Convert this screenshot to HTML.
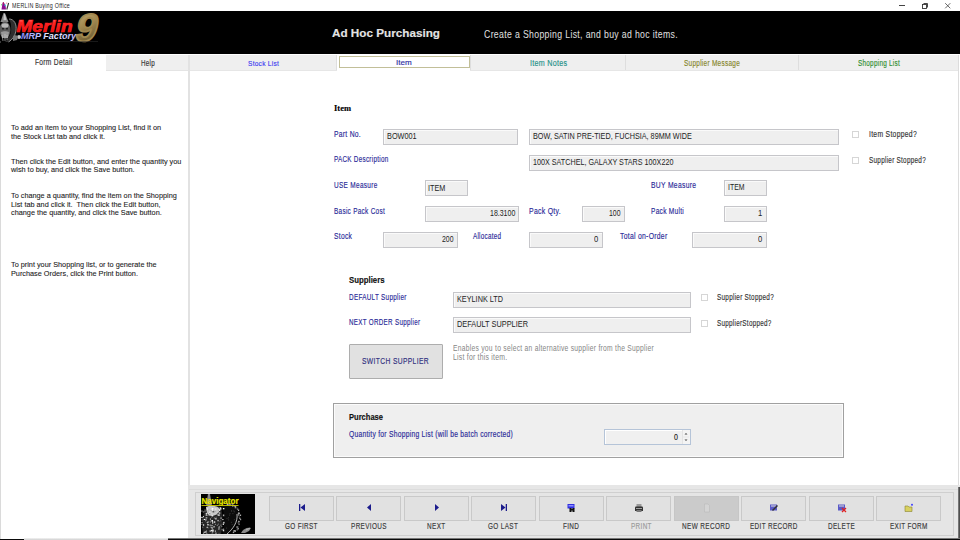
<!DOCTYPE html>
<html><head><meta charset="utf-8"><title>MERLIN Buying Office</title>
<style>
html,body{margin:0;padding:0;width:960px;height:540px;overflow:hidden;background:#fff;position:relative;font-family:"Liberation Sans",sans-serif}
.t{position:absolute;white-space:nowrap;transform-origin:0 0;-webkit-text-stroke:0.15px currentColor}
.b{position:absolute;box-sizing:border-box}
.fld{position:absolute;box-sizing:border-box;background:#efefef;border:1px solid #c6c6ca;box-shadow:inset 1px 1px 0 #fafafa}
.cb{position:absolute;box-sizing:border-box;width:7px;height:7px;border:1px solid #d6d6d6;background:#fff}
.nb{position:absolute;box-sizing:border-box;top:496px;width:65px;height:25px;background:#e1e1e1;border:1px solid #c9c9c9}
</style></head><body>
<!-- title bar -->
<svg class="b" style="left:0;top:0" width="11" height="11" viewBox="0 0 11 11"><path d="M1.5 9.5 L2.5 3 L3.5 2 L5.5 5.5 L6 9.5Z" fill="#8a1090"/><path d="M2.8 2.2 L3.6 2 L4.3 4 L3 4.5Z" fill="#b02060"/><rect x="4.6" y="4.5" width="1.3" height="1.5" fill="#30d0e0"/><path d="M5.5 4 L6.5 2.5 L7.5 3Z" fill="#e06080"/><path d="M8.6 3 L6.8 9.5" stroke="#333" stroke-width="1.1"/><rect x="1" y="4" width="1" height="1.5" fill="#60e060" opacity="0.7"/></svg>
<div class="b" style="left:899px;top:5px;width:6px;height:1px;background:#444"></div>
<svg class="b" style="left:921px;top:2px" width="8" height="8" viewBox="0 0 8 8"><rect x="1.5" y="2.5" width="4" height="4" fill="none" stroke="#333" stroke-width="0.9"/><path d="M2.5 1.5 H6.5 V5.5" fill="none" stroke="#333" stroke-width="0.9"/></svg>
<svg class="b" style="left:944px;top:2px" width="8" height="8" viewBox="0 0 8 8"><path d="M1.2 1.2 L6.3 6.3 M6.3 1.2 L1.2 6.3" stroke="#444" stroke-width="0.8"/></svg>
<!-- banner -->
<div class="b" style="left:0;top:11px;width:960px;height:43px;background:#000"></div>
<!-- tab area -->
<div class="b" style="left:0;top:54px;width:1px;height:486px;background:#dadada"></div>
<div class="b" style="left:106px;top:55px;width:83px;height:16px;background:#efefef;border-bottom:1px solid #e4e4e4"></div>
<div class="b" style="left:188px;top:55px;width:2px;height:430px;background:#e2e2e2"></div>
<div class="b" style="left:190px;top:55px;width:768px;height:16px;background:#efefef;border-bottom:1px solid #e6e6e6"></div>
<div class="b" style="left:336px;top:55px;width:1px;height:15px;background:#dedede"></div>
<div class="b" style="left:470px;top:55px;width:1px;height:15px;background:#dedede"></div>
<div class="b" style="left:625px;top:55px;width:1px;height:15px;background:#dedede"></div>
<div class="b" style="left:798px;top:55px;width:1px;height:15px;background:#dedede"></div>
<div class="b" style="left:337px;top:55px;width:133px;height:16px;background:#fff"></div>
<div class="b" style="left:339px;top:56px;width:131px;height:12px;background:#fff;border:1px solid #c2bf98"></div>
<div class="b" style="left:958px;top:55px;width:1px;height:430px;background:#dcdcdc"></div>
<!-- form fields -->
<div class="fld" style="left:383px;top:129px;width:135px;height:16px"></div>
<div class="fld" style="left:529px;top:129px;width:310px;height:16px"></div>
<div class="fld" style="left:529px;top:155px;width:310px;height:16px"></div>
<div class="cb" style="left:852px;top:131px"></div>
<div class="cb" style="left:852px;top:157px"></div>
<div class="fld" style="left:425px;top:180px;width:43px;height:16px"></div>
<div class="fld" style="left:724px;top:180px;width:43px;height:16px"></div>
<div class="fld" style="left:425px;top:206px;width:94px;height:16px"></div>
<div class="fld" style="left:582px;top:206px;width:43px;height:16px"></div>
<div class="fld" style="left:724px;top:206px;width:43px;height:16px"></div>
<div class="fld" style="left:383px;top:232px;width:75px;height:16px"></div>
<div class="fld" style="left:529px;top:232px;width:74px;height:16px"></div>
<div class="fld" style="left:692px;top:232px;width:75px;height:16px"></div>
<!-- suppliers -->
<div class="fld" style="left:453px;top:292px;width:238px;height:16px"></div>
<div class="fld" style="left:453px;top:317px;width:238px;height:16px"></div>
<div class="cb" style="left:701px;top:294px"></div>
<div class="cb" style="left:701px;top:320px"></div>
<div class="b" style="left:349px;top:344px;width:94px;height:35px;background:#e1e1e1;border:1px solid #adadad;border-radius:1px"></div>
<!-- purchase -->
<div class="b" style="left:333px;top:403px;width:511px;height:55px;background:#efefef;border:1px solid #a0a0a0;box-shadow:inset 1px 1px 0 #fbfbfb,inset -1px -1px 0 #fbfbfb"></div>
<div class="b" style="left:604px;top:429px;width:87px;height:16px;background:#f0f0f0;border:1px solid #b5c4d8;box-shadow:inset 1px 1px 0 #fff"></div>
<div class="b" style="left:682px;top:430px;width:8px;height:14px;background:#f4f4f4;border-left:1px solid #e4e4e4"></div>
<svg class="b" style="left:683px;top:431px" width="6" height="12" viewBox="0 0 6 12"><path d="M1.5 3.5 L3 2 L4.5 3.5Z" fill="#444"/><path d="M1.5 8.5 L3 10 L4.5 8.5Z" fill="#444"/><path d="M0 6 H6" stroke="#ddd" stroke-width="0.6"/></svg>
<!-- nav bar -->
<div class="b" style="left:188px;top:485px;width:772px;height:55px;background:#e6e6e6"></div>
<div class="b" style="left:189px;top:489px;width:770px;height:1px;background:#dcdcdc"></div>
<div class="b" style="left:195px;top:492px;width:759px;height:44px;border:1px solid #cfcfcf;background:#e5e5e5"></div>
<div class="b" style="left:958px;top:487px;width:2px;height:53px;background:linear-gradient(90deg,#8a8a8a,#3a3a3a)"></div>

<div class="b" style="left:0;top:539px;width:960px;height:1px;background:#0a0a0a"></div>
<div class="b" style="left:24px;top:538px;width:144px;height:2px;background:linear-gradient(#f4f4f4,#cfcfcf)"></div>
<div class="b" style="left:168px;top:538px;width:792px;height:1px;background:#777"></div>
<!-- nav buttons -->
<div class="nb" style="left:269px"></div>
<div class="nb" style="left:336px"></div>
<div class="nb" style="left:404px"></div>
<div class="nb" style="left:471px"></div>
<div class="nb" style="left:539px"></div>
<div class="nb" style="left:606px"></div>
<div class="nb" style="left:674px;background:#cbcbcb;border-color:#c6c6c6"></div>
<div class="nb" style="left:741px"></div>
<div class="nb" style="left:809px"></div>
<div class="nb" style="left:876px"></div>
<!-- nav icons -->
<svg class="b" style="left:297.5px;top:503.3px" width="8" height="9" viewBox="0 0 8 9"><rect x="1" y="1" width="1.3" height="7" fill="#1c1c8c"/><path d="M7 1 L2.5 4.5 L7 8Z" fill="#1c1c8c"/></svg>
<svg class="b" style="left:364.5px;top:503.3px" width="8" height="9" viewBox="0 0 8 9"><path d="M6 1 L2 4.5 L6 8Z" fill="#1c1c8c"/></svg>
<svg class="b" style="left:432.5px;top:503.3px" width="8" height="9" viewBox="0 0 8 9"><path d="M2 1 L6 4.5 L2 8Z" fill="#1c1c8c"/></svg>
<svg class="b" style="left:499.5px;top:503.3px" width="8" height="9" viewBox="0 0 8 9"><path d="M1 1 L5.5 4.5 L1 8Z" fill="#1c1c8c"/><rect x="5.7" y="1" width="1.3" height="7" fill="#1c1c8c"/></svg>
<svg class="b" style="left:566.5px;top:502.8px" width="10" height="10" viewBox="0 0 10 10"><rect x="0.5" y="1" width="7" height="4.5" fill="#3030e0"/><rect x="1.5" y="2" width="5" height="1.5" fill="#8a8aff"/><path d="M2.5 5 h2 v1 h1 v-1 h2 v4 h-2 v-1.5 h-1 v1.5 h-2z" fill="#111"/></svg>
<svg class="b" style="left:633.5px;top:502.8px" width="10" height="10" viewBox="0 0 10 10"><rect x="2.5" y="1" width="5" height="3" fill="#999"/><path d="M1 4.5 Q1 3.5 2 3.5 H8 Q9 3.5 9 4.5 V8 H1Z" fill="#333"/><rect x="2.5" y="7" width="5" height="2" fill="#777"/><rect x="2" y="5" width="6" height="0.8" fill="#bbb"/></svg>
<svg class="b" style="left:701.5px;top:502.8px" width="10" height="10" viewBox="0 0 10 10"><path d="M2.5 1 H6 L7.5 2.5 V9 H2.5Z" fill="#d4d4d4" stroke="#bababa" stroke-width="0.6"/></svg>
<svg class="b" style="left:768.5px;top:502.8px" width="10" height="10" viewBox="0 0 10 10"><rect x="1" y="1.5" width="7" height="6" fill="#5a5ac8"/><rect x="2" y="2.5" width="5" height="1" fill="#ddd"/><path d="M3 7 L8 2 L9 3 L4 8Z" fill="#333"/></svg>
<svg class="b" style="left:836.5px;top:502.8px" width="10" height="10" viewBox="0 0 10 10"><rect x="1" y="1.5" width="7" height="6" fill="#5a5ac8"/><rect x="2" y="2.5" width="5" height="1" fill="#ddd"/><path d="M5 5 L9 9 M9 5 L5 9" stroke="#e02020" stroke-width="1.3"/></svg>
<svg class="b" style="left:903.5px;top:502.8px" width="10" height="10" viewBox="0 0 10 10"><path d="M1 3 H4 L5 4 H8 V8.5 H1Z" fill="#d8d060" stroke="#8a8430" stroke-width="0.6"/><circle cx="8" cy="1.8" r="1" fill="#4040ff"/></svg>
<!-- navigator image -->
<svg class="b" style="left:201px;top:494px" width="54" height="40" viewBox="0 0 54 40">
<rect width="54" height="40" fill="#000"/>
<path d="M7 0 L9 0 L11 12 L5 12Z" fill="#8a8a8a"/>
<path d="M2 40 C0 30 1 20 5 15 C9 11 15 11 19 13 C22 17 22 28 20 40Z" fill="#262626"/>
<path d="M5 13 C9 11 16 11 19 15 C18 20 14 22 10 22 C7 21 5 18 5 13Z" fill="#c8c8c8"/>
<path d="M21 12 C28 9 35 13 37 19 C38 26 34 33 26 40 L22 40 C24 30 24 20 21 12Z" fill="#0c0c0c"/>
<rect x="25.7" y="9.8" width="1.3" height="1.3" fill="#9a9a9a"/>
<rect x="25.9" y="10.3" width="1.3" height="1.3" fill="#c0c0c0"/>
<rect x="27.7" y="10.8" width="1.3" height="1.3" fill="#6a6a6a"/>
<rect x="27.3" y="9.7" width="1.3" height="1.3" fill="#9a9a9a"/>
<rect x="28.5" y="9.9" width="1.3" height="1.3" fill="#9a9a9a"/>
<rect x="30.4" y="9.0" width="1.3" height="1.3" fill="#6a6a6a"/>
<rect x="30.7" y="10.1" width="1.3" height="1.3" fill="#9a9a9a"/>
<rect x="31.3" y="10.0" width="1.3" height="1.3" fill="#6a6a6a"/>
<rect x="31.0" y="11.2" width="1.3" height="1.3" fill="#c0c0c0"/>
<rect x="32.4" y="11.0" width="1.3" height="1.3" fill="#c0c0c0"/>
<rect x="33.4" y="11.8" width="1.3" height="1.3" fill="#9a9a9a"/>
<rect x="34.0" y="12.3" width="1.3" height="1.3" fill="#c0c0c0"/>
<rect x="33.7" y="13.1" width="1.3" height="1.3" fill="#9a9a9a"/>
<rect x="35.3" y="13.4" width="1.3" height="1.3" fill="#505050"/>
<rect x="36.1" y="14.2" width="1.3" height="1.3" fill="#505050"/>
<rect x="35.8" y="14.7" width="1.3" height="1.3" fill="#6a6a6a"/>
<rect x="36.9" y="15.6" width="1.3" height="1.3" fill="#c0c0c0"/>
<rect x="36.9" y="17.9" width="1.3" height="1.3" fill="#505050"/>
<rect x="36.8" y="19.1" width="1.3" height="1.3" fill="#9a9a9a"/>
<rect x="37.5" y="18.6" width="1.3" height="1.3" fill="#c0c0c0"/>
<rect x="37.0" y="20.3" width="1.3" height="1.3" fill="#9a9a9a"/>
<rect x="38.8" y="20.6" width="1.3" height="1.3" fill="#c0c0c0"/>
<rect x="37.6" y="22.4" width="1.3" height="1.3" fill="#505050"/>
<rect x="38.2" y="23.7" width="1.3" height="1.3" fill="#9a9a9a"/>
<rect x="38.9" y="24.9" width="1.3" height="1.3" fill="#9a9a9a"/>
<rect x="37.0" y="26.6" width="1.3" height="1.3" fill="#505050"/>
<rect x="37.3" y="27.1" width="1.3" height="1.3" fill="#c0c0c0"/>
<rect x="36.6" y="28.3" width="1.3" height="1.3" fill="#6a6a6a"/>
<rect x="37.5" y="29.5" width="1.3" height="1.3" fill="#6a6a6a"/>
<rect x="37.5" y="29.8" width="1.3" height="1.3" fill="#6a6a6a"/>
<rect x="36.4" y="32.4" width="1.3" height="1.3" fill="#505050"/>
<rect x="35.4" y="32.4" width="1.3" height="1.3" fill="#c0c0c0"/>
<rect x="36.5" y="34.1" width="1.3" height="1.3" fill="#c0c0c0"/>
<rect x="35.6" y="35.3" width="1.3" height="1.3" fill="#505050"/>
<rect x="35.6" y="34.4" width="1.3" height="1.3" fill="#6a6a6a"/>
<rect x="33.4" y="36.1" width="1.3" height="1.3" fill="#9a9a9a"/>
<rect x="33.4" y="36.6" width="1.3" height="1.3" fill="#c0c0c0"/>
<rect x="32.4" y="36.2" width="1.3" height="1.3" fill="#c0c0c0"/>
<rect x="32.3" y="37.0" width="1.3" height="1.3" fill="#6a6a6a"/>
<rect x="31.8" y="37.8" width="1.3" height="1.3" fill="#9a9a9a"/>
<path d="M36 20 C37 28 32 35 26 40" fill="none" stroke="#e0e0e0" stroke-width="0.8"/>
<rect x="10.0" y="36.5" width="1.1" height="1.1" fill="#585858"/>
<rect x="2.3" y="30.1" width="0.8" height="1.8" fill="#ffffff"/>
<rect x="9.7" y="16.0" width="0.7" height="0.6" fill="#585858"/>
<rect x="3.3" y="15.7" width="1.3" height="0.7" fill="#b0b0b0"/>
<rect x="4.6" y="23.2" width="1.7" height="1.3" fill="#b0b0b0"/>
<rect x="10.4" y="16.1" width="1.8" height="1.2" fill="#808080"/>
<rect x="10.6" y="15.3" width="1.5" height="1.5" fill="#ffffff"/>
<rect x="10.5" y="31.7" width="0.6" height="1.7" fill="#585858"/>
<rect x="11.6" y="17.0" width="1.7" height="1.5" fill="#585858"/>
<rect x="6.6" y="30.4" width="1.4" height="0.9" fill="#ffffff"/>
<rect x="8.1" y="17.5" width="1.2" height="1.5" fill="#e0e0e0"/>
<rect x="7.3" y="19.0" width="1.6" height="1.6" fill="#e0e0e0"/>
<rect x="16.3" y="19.1" width="1.2" height="1.5" fill="#585858"/>
<rect x="21.8" y="34.3" width="0.9" height="1.4" fill="#808080"/>
<rect x="21.0" y="25.1" width="1.7" height="1.0" fill="#b0b0b0"/>
<rect x="4.9" y="19.1" width="1.0" height="1.2" fill="#e0e0e0"/>
<rect x="21.7" y="29.5" width="1.2" height="1.4" fill="#ffffff"/>
<rect x="17.6" y="15.3" width="1.7" height="1.5" fill="#ffffff"/>
<rect x="16.5" y="25.9" width="1.1" height="1.4" fill="#e0e0e0"/>
<rect x="1.9" y="38.5" width="1.2" height="1.5" fill="#808080"/>
<rect x="1.9" y="17.3" width="0.6" height="1.3" fill="#e0e0e0"/>
<rect x="10.2" y="30.7" width="1.6" height="1.8" fill="#585858"/>
<rect x="14.5" y="22.5" width="1.3" height="0.6" fill="#585858"/>
<rect x="17.6" y="32.6" width="1.2" height="1.7" fill="#ffffff"/>
<rect x="9.5" y="36.5" width="0.6" height="0.9" fill="#e0e0e0"/>
<rect x="11.0" y="33.6" width="0.9" height="1.1" fill="#b0b0b0"/>
<rect x="2.9" y="37.6" width="1.7" height="1.4" fill="#b0b0b0"/>
<rect x="17.9" y="27.0" width="0.8" height="0.8" fill="#585858"/>
<rect x="11.2" y="36.6" width="1.3" height="1.5" fill="#e0e0e0"/>
<rect x="3.3" y="16.8" width="1.5" height="1.3" fill="#585858"/>
<rect x="7.2" y="27.0" width="1.2" height="1.5" fill="#585858"/>
<rect x="19.4" y="14.5" width="0.9" height="1.5" fill="#e0e0e0"/>
<rect x="11.2" y="28.2" width="1.1" height="1.3" fill="#ffffff"/>
<rect x="11.1" y="26.8" width="1.1" height="1.2" fill="#b0b0b0"/>
<rect x="10.5" y="38.4" width="1.7" height="1.7" fill="#585858"/>
<rect x="5.7" y="28.1" width="1.6" height="0.8" fill="#e0e0e0"/>
<rect x="2.7" y="24.9" width="1.4" height="1.1" fill="#ffffff"/>
<rect x="4.7" y="21.2" width="1.7" height="0.8" fill="#ffffff"/>
<rect x="15.8" y="30.8" width="0.9" height="0.8" fill="#e0e0e0"/>
<rect x="10.3" y="33.2" width="1.1" height="1.2" fill="#ffffff"/>
<rect x="21.8" y="35.5" width="1.4" height="1.8" fill="#e0e0e0"/>
<rect x="8.9" y="24.4" width="1.0" height="1.5" fill="#b0b0b0"/>
<rect x="0.4" y="28.0" width="1.4" height="1.1" fill="#808080"/>
<rect x="11.4" y="21.0" width="0.7" height="1.7" fill="#ffffff"/>
<rect x="5.0" y="36.7" width="0.9" height="0.6" fill="#ffffff"/>
<rect x="17.1" y="20.3" width="1.6" height="1.6" fill="#e0e0e0"/>
<rect x="14.9" y="38.5" width="0.8" height="1.7" fill="#808080"/>
<rect x="12.6" y="31.9" width="0.9" height="1.6" fill="#ffffff"/>
<rect x="4.0" y="37.2" width="1.7" height="1.4" fill="#b0b0b0"/>
<rect x="17.6" y="15.3" width="0.7" height="1.6" fill="#e0e0e0"/>
<rect x="10.0" y="22.2" width="1.1" height="1.7" fill="#585858"/>
<rect x="13.7" y="14.2" width="1.7" height="1.8" fill="#e0e0e0"/>
<rect x="5.8" y="17.9" width="1.4" height="1.2" fill="#b0b0b0"/>
<rect x="4.5" y="25.0" width="0.9" height="1.6" fill="#e0e0e0"/>
<rect x="21.9" y="14.0" width="1.5" height="1.3" fill="#ffffff"/>
<rect x="4.2" y="25.8" width="0.7" height="1.6" fill="#808080"/>
<rect x="9.5" y="26.4" width="1.8" height="1.0" fill="#808080"/>
<rect x="4.7" y="19.2" width="1.6" height="1.4" fill="#e0e0e0"/>
<rect x="14.0" y="23.9" width="1.8" height="1.6" fill="#b0b0b0"/>
<rect x="0.3" y="29.9" width="1.1" height="0.7" fill="#b0b0b0"/>
<rect x="14.6" y="23.3" width="1.4" height="0.9" fill="#585858"/>
<rect x="5.3" y="20.9" width="0.8" height="0.9" fill="#808080"/>
<rect x="0.1" y="22.8" width="1.8" height="1.3" fill="#b0b0b0"/>
<rect x="5.4" y="39.1" width="0.9" height="0.8" fill="#b0b0b0"/>
<rect x="7.4" y="15.3" width="1.2" height="0.8" fill="#b0b0b0"/>
<rect x="11.1" y="13.1" width="1.6" height="0.8" fill="#b0b0b0"/>
<rect x="12.9" y="23.6" width="1.0" height="0.9" fill="#b0b0b0"/>
<rect x="12.9" y="27.3" width="1.4" height="1.5" fill="#e0e0e0"/>
<rect x="19.3" y="23.5" width="1.5" height="1.2" fill="#b0b0b0"/>
<rect x="6.3" y="29.7" width="0.7" height="1.6" fill="#e0e0e0"/>
<rect x="19.6" y="29.9" width="0.8" height="1.2" fill="#585858"/>
<rect x="11.1" y="35.5" width="1.6" height="1.3" fill="#ffffff"/>
<rect x="19.6" y="31.4" width="0.7" height="0.7" fill="#e0e0e0"/>
<rect x="14.0" y="38.9" width="1.6" height="1.3" fill="#808080"/>
<rect x="13.8" y="29.9" width="1.2" height="0.6" fill="#e0e0e0"/>
<rect x="17.5" y="33.2" width="1.7" height="0.7" fill="#585858"/>
<rect x="11.6" y="33.1" width="0.9" height="0.7" fill="#808080"/>
<rect x="5.8" y="32.7" width="0.9" height="1.4" fill="#e0e0e0"/>
<rect x="10.1" y="35.8" width="1.2" height="1.4" fill="#ffffff"/>
<rect x="16.9" y="29.7" width="0.7" height="0.8" fill="#e0e0e0"/>
<rect x="5.6" y="33.1" width="1.3" height="0.8" fill="#b0b0b0"/>
<rect x="10.6" y="26.1" width="1.4" height="1.4" fill="#ffffff"/>
<rect x="6.4" y="26.9" width="1.2" height="1.5" fill="#808080"/>
<rect x="21.9" y="27.8" width="1.8" height="1.7" fill="#b0b0b0"/>
<rect x="0.4" y="25.4" width="1.8" height="1.1" fill="#585858"/>
<rect x="5.9" y="18.7" width="0.7" height="0.7" fill="#e0e0e0"/>
<rect x="16.4" y="20.1" width="0.8" height="1.6" fill="#b0b0b0"/>
<rect x="11.2" y="36.9" width="0.9" height="1.7" fill="#b0b0b0"/>
<rect x="10.7" y="13.7" width="1.7" height="1.4" fill="#ffffff"/>
<rect x="8.9" y="32.6" width="1.0" height="1.0" fill="#808080"/>
<rect x="18.5" y="13.0" width="1.6" height="0.7" fill="#b0b0b0"/>
<rect x="20.4" y="32.3" width="0.9" height="0.7" fill="#b0b0b0"/>
<rect x="8.6" y="36.5" width="1.0" height="1.1" fill="#ffffff"/>
<rect x="6.1" y="14.3" width="0.7" height="1.4" fill="#ffffff"/>
<rect x="14.0" y="17.0" width="1.1" height="1.0" fill="#b0b0b0"/>
<rect x="17.0" y="34.2" width="1.7" height="1.6" fill="#808080"/>
<rect x="13.9" y="37.7" width="1.3" height="1.5" fill="#585858"/>
<rect x="1.1" y="32.8" width="1.3" height="0.8" fill="#808080"/>
<rect x="19.1" y="26.1" width="0.8" height="1.2" fill="#585858"/>
<rect x="7.6" y="21.0" width="1.1" height="0.9" fill="#b0b0b0"/>
<rect x="10.6" y="31.1" width="0.8" height="0.8" fill="#ffffff"/>
<rect x="4.6" y="37.5" width="1.3" height="1.1" fill="#808080"/>
<rect x="7.3" y="33.5" width="0.8" height="0.8" fill="#808080"/>
<rect x="2.0" y="22.2" width="1.0" height="1.0" fill="#ffffff"/>
<rect x="17.8" y="18.5" width="1.5" height="1.1" fill="#ffffff"/>
<rect x="9.1" y="27.2" width="0.9" height="1.5" fill="#808080"/>
<rect x="11.0" y="28.5" width="0.8" height="1.2" fill="#b0b0b0"/>
<rect x="13.9" y="36.3" width="0.7" height="1.7" fill="#e0e0e0"/>
<rect x="8.5" y="30.4" width="1.7" height="1.6" fill="#808080"/>
<rect x="19.2" y="13.6" width="1.1" height="1.5" fill="#ffffff"/>
<rect x="17.7" y="39.1" width="0.6" height="1.1" fill="#808080"/>
<rect x="20.4" y="35.3" width="1.8" height="0.9" fill="#808080"/>
<rect x="2.4" y="17.2" width="1.8" height="0.7" fill="#585858"/>
<rect x="18.2" y="31.9" width="0.7" height="1.5" fill="#808080"/>
<rect x="0.0" y="16.4" width="1.7" height="1.4" fill="#585858"/>
<rect x="6.7" y="16.5" width="1.2" height="1.1" fill="#b0b0b0"/>
<rect x="16.8" y="15.7" width="1.2" height="1.3" fill="#b0b0b0"/>
<rect x="8.5" y="19.0" width="0.6" height="1.2" fill="#585858"/>
<rect x="21.9" y="20.5" width="1.4" height="1.7" fill="#b0b0b0"/>
<rect x="10.5" y="19.3" width="0.6" height="1.1" fill="#e0e0e0"/>
<rect x="30.1" y="16.2" width="1" height="1" fill="#3a3a3a"/>
<rect x="25.1" y="33.6" width="1" height="1" fill="#3a3a3a"/>
<rect x="30.1" y="16.7" width="1" height="1" fill="#3a3a3a"/>
<rect x="25.5" y="23.9" width="1" height="1" fill="#3a3a3a"/>
<rect x="27.1" y="25.4" width="1" height="1" fill="#3a3a3a"/>
<rect x="30.7" y="30.1" width="1" height="1" fill="#3a3a3a"/>
<rect x="27.0" y="23.3" width="1" height="1" fill="#3a3a3a"/>
<rect x="23.1" y="21.1" width="1" height="1" fill="#3a3a3a"/>
<rect x="32.3" y="16.4" width="1" height="1" fill="#3a3a3a"/>
<rect x="28.5" y="19.2" width="1" height="1" fill="#3a3a3a"/>
<rect x="31.4" y="19.1" width="1" height="1" fill="#3a3a3a"/>
<rect x="28.1" y="20.6" width="1" height="1" fill="#3a3a3a"/>
<rect x="32.8" y="17.3" width="1" height="1" fill="#3a3a3a"/>
<rect x="29.9" y="27.8" width="1" height="1" fill="#3a3a3a"/>
<rect x="32.9" y="25.2" width="1" height="1" fill="#3a3a3a"/>
<path d="M40 39 C42 35 46 33 50 34 L48 37 L44 39Z" fill="#8a8a8a"/>
<path d="M45 36 L49 34" stroke="#ccc" stroke-width="0.6"/>
<text x="0.5" y="10" font-family="Liberation Sans" font-weight="bold" font-size="8.2" fill="#e8e800" stroke="#e8e800" stroke-width="0.2" textLength="37" lengthAdjust="spacingAndGlyphs">Navigator</text>
<rect x="0.5" y="11" width="37" height="0.9" fill="#c8c800"/>
</svg>
<!-- logo -->
<svg class="b" style="left:0;top:11px" width="100" height="32" viewBox="0 0 100 32">
<defs>
<linearGradient id="gr" x1="0" y1="0" x2="0" y2="1"><stop offset="0" stop-color="#ffc8c8"/><stop offset="0.3" stop-color="#ff2a2a"/><stop offset="1" stop-color="#e00000"/></linearGradient>
<linearGradient id="gb" x1="0" y1="0" x2="1" y2="0"><stop offset="0" stop-color="#8a8af8"/><stop offset="0.55" stop-color="#f0f0ff"/><stop offset="1" stop-color="#b8b8ff"/></linearGradient>
<linearGradient id="gg" x1="0" y1="0" x2="0.3" y2="1"><stop offset="0" stop-color="#c8b27a"/><stop offset="0.5" stop-color="#a48a52"/><stop offset="1" stop-color="#6c5a30"/></linearGradient>
</defs>
<path d="M9 8 C14 8 17 13 16 20 C15 25 12 29 9 31 L5 31 C9 27 12 22 11 16 C11 12 10 10 9 8Z" fill="#2e2e2e"/>
<path d="M9 8 C14 8 17 13 16 20 C15 25 12 29 8.5 31" fill="none" stroke="#9a9a9a" stroke-width="0.9"/>
<path d="M3.5 2 L5 2 L8.5 11 L0.5 11Z" fill="#8a8a8a"/>
<path d="M4 3 L5 3 L6.5 9 L3.5 9Z" fill="#c8c8c8"/>
<ellipse cx="5" cy="19" rx="5.5" ry="8.5" fill="#5a5a5a"/>
<ellipse cx="5" cy="14.5" rx="3.5" ry="2.2" fill="#b8b8b8"/>
<rect x="2" y="17" width="2" height="1.5" fill="#222"/><rect x="6" y="17" width="2" height="1.5" fill="#222"/>
<path d="M1 21 C3 20 7 20 9 21 L8 27 L2 27Z" fill="#9a9a9a"/>
<path d="M2 24 L3 30 M5 23 L5 30 M7 24 L7 29" stroke="#d0d0d0" stroke-width="0.6"/>
<circle cx="19" cy="26" r="2" fill="#c8c8c8"/>
<path d="M13 25 C15 24 17 24 18 26 L17 29 L13 30Z" fill="#777"/>
<rect x="0" y="30" width="1" height="13" fill="#3a3a3a"/>
<text x="85" y="29.5" font-family="Liberation Sans" font-weight="bold" font-size="39" fill="url(#gg)" stroke="#a08850" stroke-width="1.8" text-anchor="middle" transform="skewX(-14) translate(6.5 0)">9</text>
<text x="16.5" y="20.8" font-family="Liberation Sans" font-weight="bold" font-style="italic" font-size="16.5" fill="url(#gr)" stroke="#ff2020" stroke-width="0.7" textLength="56" lengthAdjust="spacingAndGlyphs">Merlin</text>
<text x="21" y="27.8" font-family="Liberation Sans" font-weight="bold" font-style="italic" font-size="9.8" fill="url(#gb)" textLength="55" lengthAdjust="spacingAndGlyphs">MRP Factory</text>
<rect x="20" y="30" width="78" height="0.6" fill="#2a2a2a"/>
</svg>
<div class=t style='left:11.70px;top:2.59px;font-size:6.6px;line-height:6.6px;color:#262626;transform:scaleX(0.8104);letter-spacing:0.286px;-webkit-text-stroke:0'>MERLIN Buying Office</div>
<div class=t style='left:332.00px;top:28.37px;font-size:11.8px;line-height:11.8px;color:#e4e4e4;transform:scaleX(0.9925);font-weight:bold'>Ad Hoc Purchasing</div>
<div class=t style='left:484.20px;top:28.61px;font-size:11.4px;line-height:11.4px;color:#e0e0e0;transform:scaleX(0.7639);letter-spacing:0.452px;-webkit-text-stroke:0'>Create a Shopping List, and buy ad hoc items.</div>
<div class=t style='left:34.50px;top:57.95px;font-size:8.3px;line-height:8.3px;color:#333;transform:scaleX(0.8047);letter-spacing:0.339px'>Form Detail</div>
<div class=t style='left:141.00px;top:59.73px;font-size:8.2px;line-height:8.2px;color:#333;transform:scaleX(0.7647);letter-spacing:0.366px'>Help</div>
<div class=t style='left:248.00px;top:60.00px;font-size:8.0px;line-height:8.0px;color:#3a3af0;transform:scaleX(0.8222);letter-spacing:0.302px'>Stock List</div>
<div class=t style='left:396.30px;top:58.90px;font-size:8.0px;line-height:8.0px;color:#2c2ca0;transform:scaleX(1.0088)'>Item</div>
<div class=t style='left:529.70px;top:59.24px;font-size:8.3px;line-height:8.3px;color:#239088;transform:scaleX(0.8598);letter-spacing:0.349px'>Item Notes</div>
<div class=t style='left:684.40px;top:59.45px;font-size:8.3px;line-height:8.3px;color:#85852a;transform:scaleX(0.7756);letter-spacing:0.361px'>Supplier Message</div>
<div class=t style='left:858.00px;top:58.74px;font-size:8.3px;line-height:8.3px;color:#2e8e2e;transform:scaleX(0.7685);letter-spacing:0.336px'>Shopping List</div>
<div class=t style='left:11.00px;top:123.50px;font-size:8.0px;line-height:8.0px;color:#222222;transform:scaleX(0.9120);-webkit-text-stroke:0.1px currentColor'>To add an item to your Shopping List, find it on</div>
<div class=t style='left:11.00px;top:132.50px;font-size:8.0px;line-height:8.0px;color:#222222;transform:scaleX(0.9120);-webkit-text-stroke:0.1px currentColor'>the Stock List tab and click it.</div>
<div class=t style='left:11.00px;top:157.50px;font-size:8.0px;line-height:8.0px;color:#222222;transform:scaleX(0.9120);-webkit-text-stroke:0.1px currentColor'>Then click the Edit button, and enter the quantity you</div>
<div class=t style='left:11.00px;top:166.40px;font-size:8.0px;line-height:8.0px;color:#222222;transform:scaleX(0.9120);-webkit-text-stroke:0.1px currentColor'>wish to buy, and click the Save button.</div>
<div class=t style='left:11.00px;top:191.60px;font-size:8.0px;line-height:8.0px;color:#222222;transform:scaleX(0.9120);-webkit-text-stroke:0.1px currentColor'>To change a quantity, find the item on the Shopping</div>
<div class=t style='left:11.00px;top:200.50px;font-size:8.0px;line-height:8.0px;color:#222222;transform:scaleX(0.9120);-webkit-text-stroke:0.1px currentColor'>List tab and click it.&nbsp; Then click the Edit button,</div>
<div class=t style='left:11.00px;top:209.10px;font-size:8.0px;line-height:8.0px;color:#222222;transform:scaleX(0.9120);-webkit-text-stroke:0.1px currentColor'>change the quantity, and click the Save button.</div>
<div class=t style='left:11.00px;top:260.60px;font-size:8.0px;line-height:8.0px;color:#222222;transform:scaleX(0.9120);-webkit-text-stroke:0.1px currentColor'>To print your Shopping list, or to generate the</div>
<div class=t style='left:11.00px;top:269.50px;font-size:8.0px;line-height:8.0px;color:#222222;transform:scaleX(0.9120);-webkit-text-stroke:0.1px currentColor'>Purchase Orders, click the Print button.</div>
<div class=t style='left:333.75px;top:103.78px;font-size:9.0px;line-height:9.0px;color:#000;transform:scaleX(0.9444);font-weight:bold;font-family:"Liberation Serif", serif'>Item</div>
<div class=t style='left:333.75px;top:130.39px;font-size:8.6px;line-height:8.6px;color:#2a2a98;transform:scaleX(0.7878);letter-spacing:0.343px'>Part No.</div>
<div class=t style='left:333.70px;top:155.19px;font-size:8.6px;line-height:8.6px;color:#2a2a98;transform:scaleX(0.7358);letter-spacing:0.370px'>PACK Description</div>
<div class=t style='left:333.50px;top:181.09px;font-size:8.6px;line-height:8.6px;color:#2a2a98;transform:scaleX(0.7498);letter-spacing:0.423px'>USE Measure</div>
<div class=t style='left:333.90px;top:207.09px;font-size:8.6px;line-height:8.6px;color:#2a2a98;transform:scaleX(0.7498);letter-spacing:0.363px'>Basic Pack Cost</div>
<div class=t style='left:528.90px;top:206.79px;font-size:8.6px;line-height:8.6px;color:#2a2a98;transform:scaleX(0.8038);letter-spacing:0.354px'>Pack Qty.</div>
<div class=t style='left:333.90px;top:232.29px;font-size:8.6px;line-height:8.6px;color:#2a2a98;transform:scaleX(0.7788);letter-spacing:0.374px'>Stock</div>
<div class=t style='left:473.20px;top:232.29px;font-size:8.6px;line-height:8.6px;color:#2a2a98;transform:scaleX(0.7337);letter-spacing:0.342px'>Allocated</div>
<div class=t style='left:651.00px;top:181.29px;font-size:8.6px;line-height:8.6px;color:#2a2a98;transform:scaleX(0.7830);letter-spacing:0.422px'>BUY Measure</div>
<div class=t style='left:651.00px;top:207.19px;font-size:8.6px;line-height:8.6px;color:#2a2a98;transform:scaleX(0.7659);letter-spacing:0.345px'>Pack Multi</div>
<div class=t style='left:620.20px;top:232.49px;font-size:8.6px;line-height:8.6px;color:#2a2a98;transform:scaleX(0.7954);letter-spacing:0.341px'>Total on-Order</div>
<div class=t style='left:868.75px;top:129.69px;font-size:8.6px;line-height:8.6px;color:#333;transform:scaleX(0.7899);letter-spacing:0.374px'>Item Stopped?</div>
<div class=t style='left:868.75px;top:155.89px;font-size:8.6px;line-height:8.6px;color:#333;transform:scaleX(0.7415);letter-spacing:0.362px'>Supplier Stopped?</div>
<div class=t style='left:349.00px;top:275.69px;font-size:8.6px;line-height:8.6px;color:#111;transform:scaleX(0.9063);font-weight:bold'>Suppliers</div>
<div class=t style='left:349.00px;top:292.69px;font-size:8.6px;line-height:8.6px;color:#2a2a98;transform:scaleX(0.7392);letter-spacing:0.390px'>DEFAULT Supplier</div>
<div class=t style='left:349.00px;top:317.69px;font-size:8.6px;line-height:8.6px;color:#2a2a98;transform:scaleX(0.7280);letter-spacing:0.412px'>NEXT ORDER Supplier</div>
<div class=t style='left:716.90px;top:292.69px;font-size:8.6px;line-height:8.6px;color:#333;transform:scaleX(0.7415);letter-spacing:0.362px'>Supplier Stopped?</div>
<div class=t style='left:716.90px;top:318.69px;font-size:8.6px;line-height:8.6px;color:#333;transform:scaleX(0.7352);letter-spacing:0.371px'>SupplierStopped?</div>
<div class=t style='left:361.90px;top:356.69px;font-size:8.6px;line-height:8.6px;color:#30307f;transform:scaleX(0.7823);letter-spacing:0.457px'>SWITCH SUPPLIER</div>
<div class=t style='left:452.70px;top:343.69px;font-size:8.6px;line-height:8.6px;color:#858585;transform:scaleX(0.7836);letter-spacing:0.326px;-webkit-text-stroke:0'>Enables you to select an alternative supplier from the Supplier</div>
<div class=t style='left:452.80px;top:352.69px;font-size:8.6px;line-height:8.6px;color:#858585;transform:scaleX(0.8000);letter-spacing:0.286px;-webkit-text-stroke:0'>List for this item.</div>
<div class=t style='left:349.00px;top:413.29px;font-size:8.6px;line-height:8.6px;color:#111;transform:scaleX(0.8785);font-weight:bold'>Purchase</div>
<div class=t style='left:349.00px;top:429.69px;font-size:8.6px;line-height:8.6px;color:#2a2a98;transform:scaleX(0.7838);letter-spacing:0.322px'>Quantity for Shopping List (will be batch corrected)</div>
<div class=t style='left:386.70px;top:131.86px;font-size:8.4px;line-height:8.4px;color:#1e1e1e;transform:scaleX(0.8739);-webkit-text-stroke:0'>BOW001</div>
<div class=t style='left:532.50px;top:132.26px;font-size:8.4px;line-height:8.4px;color:#1e1e1e;transform:scaleX(0.8666);-webkit-text-stroke:0'>BOW, SATIN PRE-TIED, FUCHSIA, 89MM WIDE</div>
<div class=t style='left:532.50px;top:158.26px;font-size:8.4px;line-height:8.4px;color:#1e1e1e;transform:scaleX(0.8592);-webkit-text-stroke:0'>100X SATCHEL, GALAXY STARS 100X220</div>
<div class=t style='left:428.00px;top:183.96px;font-size:8.4px;line-height:8.4px;color:#1e1e1e;transform:scaleX(0.8643);-webkit-text-stroke:0'>ITEM</div>
<div class=t style='left:489.70px;top:209.46px;font-size:8.4px;line-height:8.4px;color:#1e1e1e;transform:scaleX(0.8355);-webkit-text-stroke:0'>18.3100</div>
<div class=t style='left:609.40px;top:209.36px;font-size:8.4px;line-height:8.4px;color:#1e1e1e;transform:scaleX(0.8223);-webkit-text-stroke:0'>100</div>
<div class=t style='left:441.50px;top:235.06px;font-size:8.4px;line-height:8.4px;color:#1e1e1e;transform:scaleX(0.8223);-webkit-text-stroke:0'>200</div>
<div class=t style='left:594.44px;top:235.06px;font-size:8.4px;line-height:8.4px;color:#1e1e1e;transform:scaleX(0.9120);-webkit-text-stroke:0'>0</div>
<div class=t style='left:727.80px;top:183.26px;font-size:8.4px;line-height:8.4px;color:#1e1e1e;transform:scaleX(0.8244);-webkit-text-stroke:0'>ITEM</div>
<div class=t style='left:757.94px;top:209.36px;font-size:8.4px;line-height:8.4px;color:#1e1e1e;transform:scaleX(0.9120);-webkit-text-stroke:0'>1</div>
<div class=t style='left:758.24px;top:235.06px;font-size:8.4px;line-height:8.4px;color:#1e1e1e;transform:scaleX(0.9120);-webkit-text-stroke:0'>0</div>
<div class=t style='left:456.50px;top:294.86px;font-size:8.4px;line-height:8.4px;color:#1e1e1e;transform:scaleX(0.8695);-webkit-text-stroke:0'>KEYLINK LTD</div>
<div class=t style='left:456.50px;top:319.86px;font-size:8.4px;line-height:8.4px;color:#1e1e1e;transform:scaleX(0.8799);-webkit-text-stroke:0'>DEFAULT SUPPLIER</div>
<div class=t style='left:674.23px;top:432.52px;font-size:8.8px;line-height:8.8px;color:#222;transform:scaleX(0.8004);letter-spacing:0.427px'>0</div>
<div class=t style='left:285.08px;top:522.36px;font-size:8.4px;line-height:8.4px;color:#3a3a3a;transform:scaleX(0.7636);letter-spacing:0.430px'>GO FIRST</div>
<div class=t style='left:350.53px;top:522.36px;font-size:8.4px;line-height:8.4px;color:#3a3a3a;transform:scaleX(0.7636);letter-spacing:0.471px'>PREVIOUS</div>
<div class=t style='left:427.23px;top:522.36px;font-size:8.4px;line-height:8.4px;color:#3a3a3a;transform:scaleX(0.7636);letter-spacing:0.486px'>NEXT</div>
<div class=t style='left:488.43px;top:522.36px;font-size:8.4px;line-height:8.4px;color:#3a3a3a;transform:scaleX(0.7636);letter-spacing:0.451px'>GO LAST</div>
<div class=t style='left:563.39px;top:522.36px;font-size:8.4px;line-height:8.4px;color:#3a3a3a;transform:scaleX(0.7636);letter-spacing:0.425px'>FIND</div>
<div class=t style='left:631.07px;top:522.36px;font-size:8.4px;line-height:8.4px;color:#9a9a9a;transform:scaleX(0.7636);letter-spacing:0.437px'>PRINT</div>
<div class=t style='left:682.36px;top:522.36px;font-size:8.4px;line-height:8.4px;color:#3a3a3a;transform:scaleX(0.7636);letter-spacing:0.506px'>NEW RECORD</div>
<div class=t style='left:749.62px;top:522.36px;font-size:8.4px;line-height:8.4px;color:#3a3a3a;transform:scaleX(0.7636);letter-spacing:0.455px'>EDIT RECORD</div>
<div class=t style='left:827.97px;top:522.36px;font-size:8.4px;line-height:8.4px;color:#3a3a3a;transform:scaleX(0.7636);letter-spacing:0.472px'>DELETE</div>
<div class=t style='left:889.64px;top:522.36px;font-size:8.4px;line-height:8.4px;color:#3a3a3a;transform:scaleX(0.7636);letter-spacing:0.439px'>EXIT FORM</div>
</body></html>
